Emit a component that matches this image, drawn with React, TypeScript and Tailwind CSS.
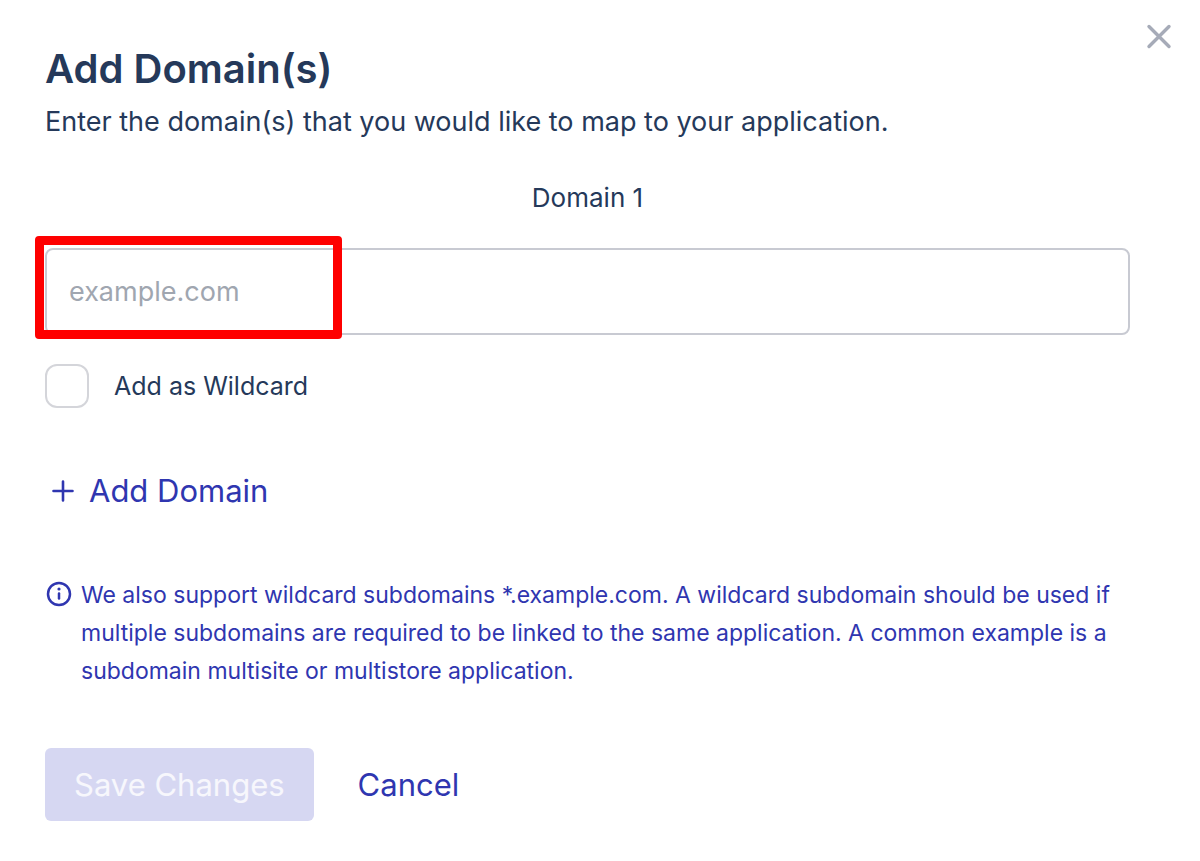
import { useState } from "react";

export default function App() {
  const [domain, setDomain] = useState("");
  const [wildcard, setWildcard] = useState(false);

  return (
    <div
      role="dialog"
      aria-labelledby="dialog-title"
      className="bg-white pt-6 pb-10 pl-[45px] pr-7 font-['Inter',sans-serif] text-[#25395a]"
    >
      <div className="flex items-start justify-between">
        <h1 id="dialog-title" className="pt-5 text-[40px] leading-[50px] font-semibold">
          Add Domain(s)
        </h1>
        <button type="button" aria-label="Close" className="text-[#a6abb8]">
          <svg width="26" height="26" viewBox="0 0 26 26" fill="none" stroke="currentColor" strokeWidth="3.4" strokeLinecap="round">
            <path d="M3 2.5 23 22.5M23 2.5 3 22.5" />
          </svg>
        </button>
      </div>

      <form className="pr-[42px]">
        <p className="mt-[10px] text-[27px] leading-9">
          Enter the domain(s) that you would like to map to your application.
        </p>

        <label htmlFor="domain" className="mt-10 block text-center text-[26px] leading-9">
          Domain 1
        </label>
        <div className="relative mt-8">
          <input
            id="domain"
            type="text"
            placeholder="example.com"
            value={domain}
            onChange={(e) => setDomain(e.target.value)}
            className="block h-[87px] w-full rounded-lg border-2 border-[#c8cad2] bg-white px-[22px] text-[27px] placeholder:text-[#a0a6b0]"
          />
          {/* highlight around the field */}
          <div className="pointer-events-none absolute -top-3 -left-[10px] h-[103px] w-[307px] rounded-sm border-[9px] border-[#fe0000]" />
        </div>

        <div className="mt-[29px] flex items-center gap-[25px]">
          <input
            id="wildcard"
            type="checkbox"
            checked={wildcard}
            onChange={(e) => setWildcard(e.target.checked)}
            className="size-11 appearance-none rounded-xl border-2 border-[#d4d5da] bg-white checked:bg-[#2d36b0]"
          />
          <label htmlFor="wildcard" className="text-[25px] leading-9">
            Add as Wildcard
          </label>
        </div>

        <button type="button" className="mt-[63px] ml-[7px] flex items-center gap-[15px] text-[31px] leading-10 text-[#2f36b0]">
          <svg width="22" height="22" viewBox="0 0 22 22" fill="none" stroke="currentColor" strokeWidth="2.6" strokeLinecap="round">
            <path d="M11 1.5v19M1.5 11h19" />
          </svg>
          Add Domain
        </button>

        <div className="mt-[65px] flex items-start gap-2 text-[#2f36b0]">
          <svg width="28" height="28" viewBox="0 0 28 28" fill="none" stroke="currentColor" strokeWidth="2.5" strokeLinecap="round" className="mt-1 shrink-0">
            <circle cx="14" cy="14" r="11" />
            <path d="M14 13.5v5" />
            <circle cx="14" cy="9" r="1.6" fill="currentColor" stroke="none" />
          </svg>
          <p className="text-[23px] leading-[38px]">
            We also support wildcard subdomains *.example.com. A wildcard subdomain should be used if
            multiple subdomains are required to be linked to the same application. A common example is a
            subdomain multisite or multistore application.
          </p>
        </div>

        <div className="mt-[58px] flex items-center gap-11 text-[31px] leading-10">
          <button type="submit" disabled className="h-[73px] rounded-md bg-[#d6d7f2] px-[29px] text-white/80">
            Save Changes
          </button>
          <button type="button" className="text-[#2f36b0]">
            Cancel
          </button>
        </div>
      </form>
    </div>
  );
}
